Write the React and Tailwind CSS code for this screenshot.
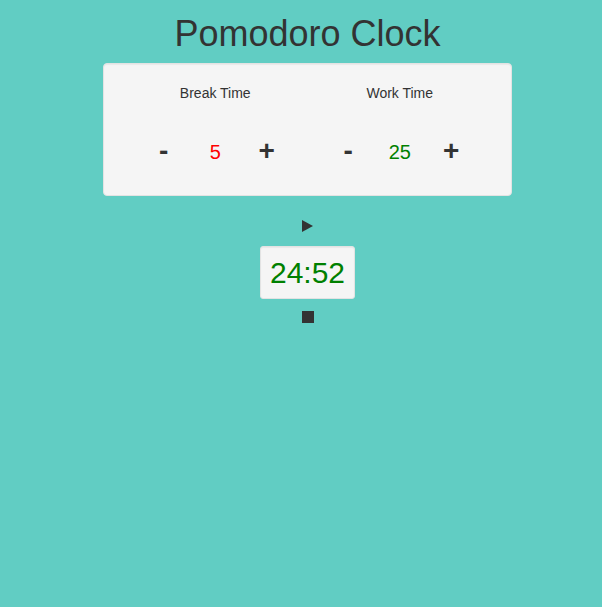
import { useEffect, useState } from "react";

function TimeSetting({ id, label, value, onChange, color }) {
  return (
    <div role="group" aria-labelledby={id} className="px-[15px] text-center">
      <h2 id={id} className="text-sm leading-5">{label}</h2>
      <div className="mt-7 grid grid-cols-3 items-center">
        <button
          type="button"
          aria-label={`Decrease ${label}`}
          onClick={() => onChange(Math.max(1, value - 1))}
          className="cursor-pointer pb-0.5 text-[28px] leading-10 font-bold"
        >
          -
        </button>
        <output className={`text-xl leading-10 ${color}`}>{value}</output>
        <button
          type="button"
          aria-label={`Increase ${label}`}
          onClick={() => onChange(value + 1)}
          className="cursor-pointer pb-0.5 text-[28px] leading-10 font-bold"
        >
          +
        </button>
      </div>
    </div>
  );
}

export default function App() {
  const [breakTime, setBreakTime] = useState(5);
  const [workTime, setWorkTime] = useState(25);
  const [seconds, setSeconds] = useState(24 * 60 + 52);
  const [running, setRunning] = useState(false);

  useEffect(() => {
    if (!running) return undefined;
    const timer = setInterval(() => setSeconds((s) => Math.max(0, s - 1)), 1000);
    return () => clearInterval(timer);
  }, [running]);

  const changeWork = (minutes) => {
    setWorkTime(minutes);
    setSeconds(minutes * 60);
  };

  const clock = `${Math.floor(seconds / 60)}:${String(seconds % 60).padStart(2, "0")}`;

  return (
    <main className="flex min-h-screen flex-col items-center bg-[#61cdc3] pt-3.5 pl-[13px] font-['Liberation_Sans',Arial,sans-serif] text-[#333]">
      <h1 className="text-4xl leading-10">Pomodoro Clock</h1>

      <section className="mt-[9px] grid w-[calc(100%-180px)] max-w-[780px] grid-cols-2 rounded border border-[#e3e3e3] bg-[#f5f5f5] px-[19px] pt-[19px] pb-[22px] shadow-[inset_0_1px_1px_rgba(0,0,0,0.05)]">
        <TimeSetting id="break-time" label="Break Time" value={breakTime} onChange={setBreakTime} color="text-[#ff0000]" />
        <TimeSetting id="work-time" label="Work Time" value={workTime} onChange={changeWork} color="text-[#008000]" />
      </section>

      <button type="button" aria-label="Start" onClick={() => setRunning(true)} className="mt-6 cursor-pointer">
        <svg width="12" height="12" viewBox="0 0 12 12" fill="currentColor" aria-hidden="true">
          <path d="M0 0 L11 6 L0 12 Z" />
        </svg>
      </button>

      <div role="timer" className="mt-3.5 rounded-[3px] border border-[#e3e3e3] bg-[#f5f5f5] p-[9px] text-3xl leading-[33px] text-[#008000] shadow-[inset_0_1px_1px_rgba(0,0,0,0.05)]">
        {clock}
      </div>

      <button type="button" aria-label="Stop" onClick={() => setRunning(false)} className="mt-3 cursor-pointer">
        <svg width="12" height="12" viewBox="0 0 12 12" fill="currentColor" aria-hidden="true">
          <path d="M0 0 H12 V12 H0 Z" />
        </svg>
      </button>
    </main>
  );
}
